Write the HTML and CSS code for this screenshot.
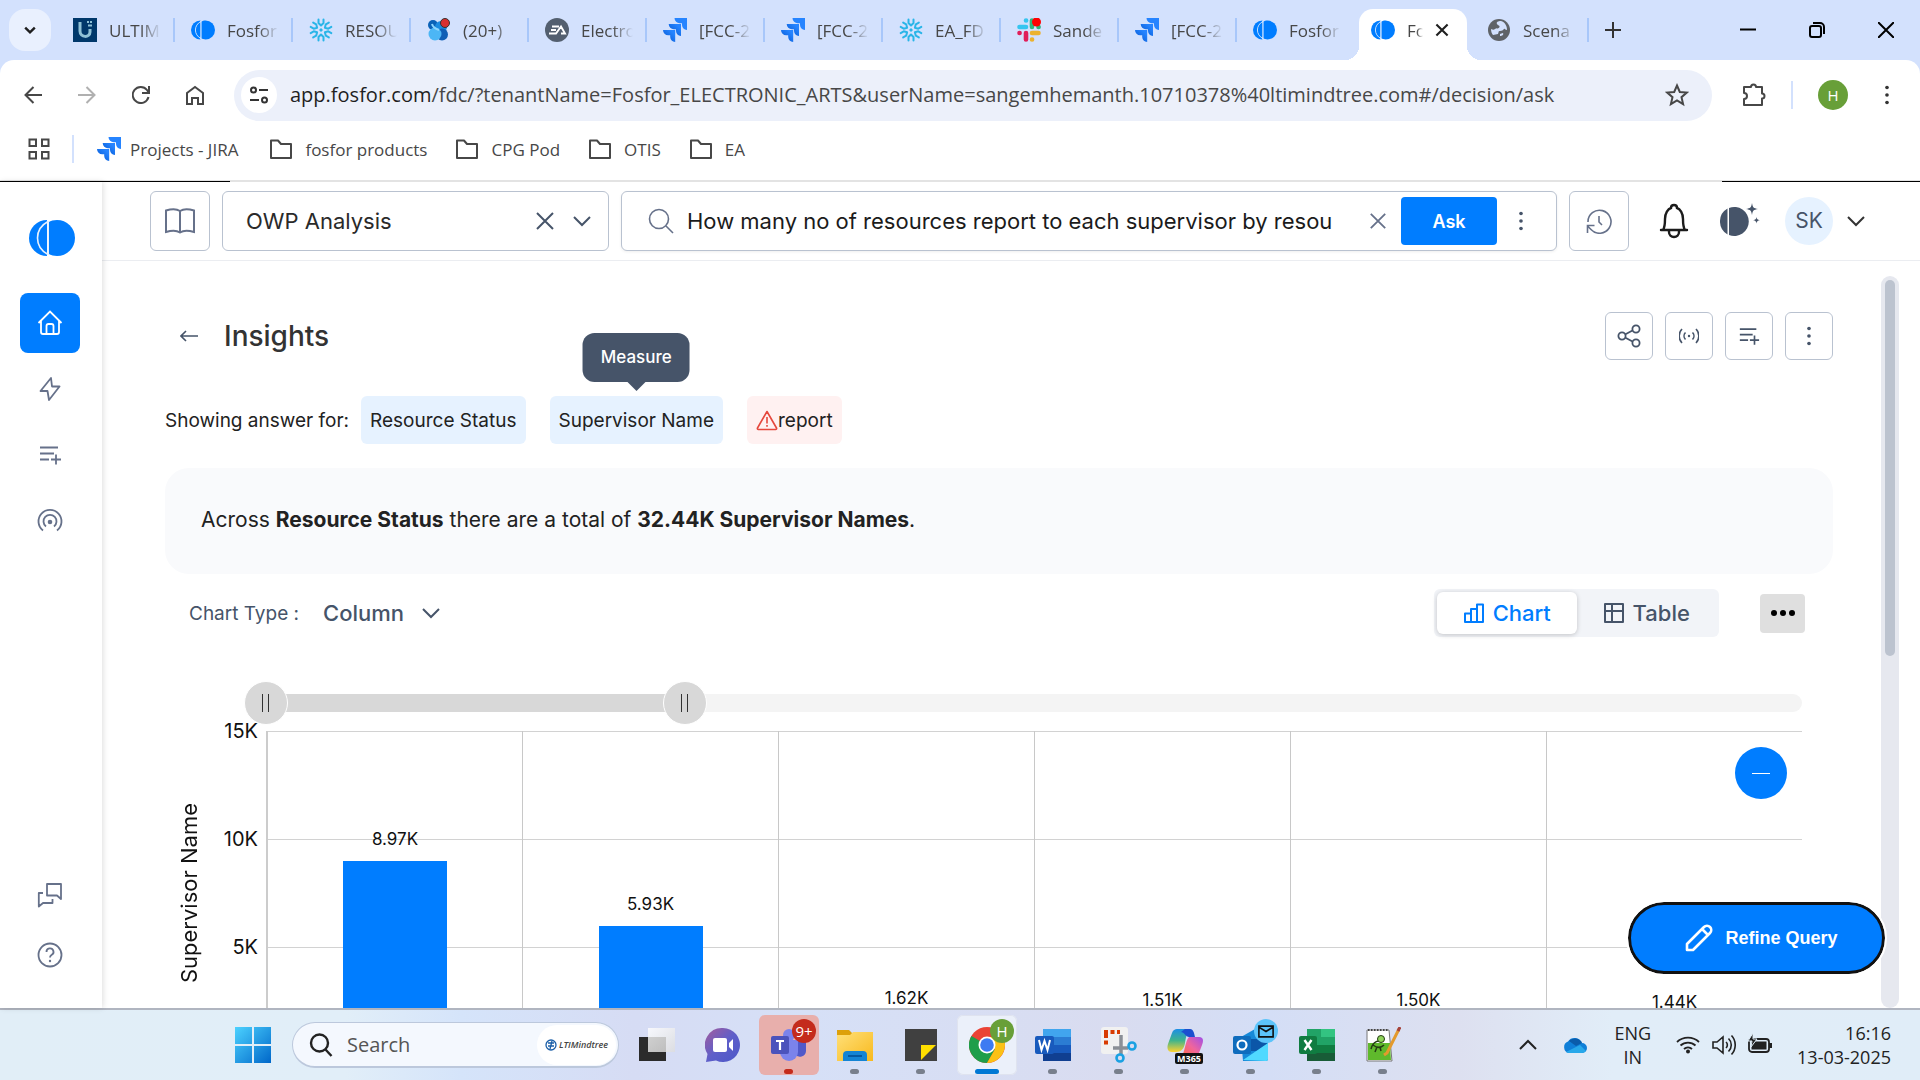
FILE: index.html
```html
<!DOCTYPE html>
<html lang="en">
<head>
<meta charset="utf-8">
<title>Fosfor - Insights</title>
<link rel="stylesheet" href="styles.css">
</head>
<body>
<svg class="sprite" aria-hidden="true">
  <defs>
    <linearGradient id="g-jira" x1="1" y1="0" x2="0" y2="1"><stop offset=".2" stop-color="#2684ff"/><stop offset="1" stop-color="#0052cc"/></linearGradient>
    <linearGradient id="g-win" x1="0" y1="0" x2="1" y2="1"><stop offset="0" stop-color="#4cd2ff"/><stop offset="1" stop-color="#0067c9"/></linearGradient>
    <linearGradient id="g-chat" x1="0" y1="0" x2="1" y2="1"><stop offset="0" stop-color="#a65c9c"/><stop offset=".5" stop-color="#5f5fc9"/><stop offset="1" stop-color="#4b57c8"/></linearGradient>
    <linearGradient id="g-folder" x1="0" y1="0" x2="1" y2="1"><stop offset="0" stop-color="#ffe07a"/><stop offset="1" stop-color="#f8b91d"/></linearGradient>
    <linearGradient id="g-cop1" x1="0" y1="0" x2="0" y2="1"><stop offset="0" stop-color="#1c8ee6"/><stop offset=".5" stop-color="#3fb48c"/><stop offset="1" stop-color="#ffd22e"/></linearGradient>
    <linearGradient id="g-cop2" x1="0" y1="1" x2="1" y2="0"><stop offset="0" stop-color="#ff6a3d"/><stop offset=".5" stop-color="#f0659c"/><stop offset="1" stop-color="#a04fe8"/></linearGradient>
    <linearGradient id="g-view" x1="0" y1="0" x2="1" y2="1"><stop offset="0" stop-color="#fff"/><stop offset="1" stop-color="#ddd"/></linearGradient>
    <path id="snow-arm" d="M9.500 1.500V5L12 7.500 14.500 5V1.500"/>
  </defs>
  <symbol id="i-fosfor" viewBox="0 0 46 36"><path d="M18 0a18 18 0 0 0 0 36z" fill="#007dff"/><path d="M28 0a18 18 0 0 1 0 36c-3.300 0-6.300-.9-8.500-2.200V2.200C21.700.9 24.700 0 28 0z" fill="#007dff"/><path d="M19 1.500C5 9 5 27 19 34.500M19.200 1v34" fill="none" stroke="#e8f2ff" stroke-width="1.600"/><path d="M17.500 5v26C9 23 9 13 17.500 5z" fill="#007dff"/></symbol>
  <symbol id="i-ul" viewBox="0 0 24 24"><path d="M0 0h24v24H0z" fill="#00386b"/><path d="M7 4v9c0 7 10 7 10 1V11" fill="none" stroke="#8fc1d6" stroke-width="3"/><path d="M14 4h2m1 0h2M15 7.500h4" stroke="#8fc1d6" stroke-width="2"/></symbol>
  <symbol id="i-snow" viewBox="0 0 24 24"><g fill="none" stroke="#29b5e8" stroke-width="2" stroke-linecap="round" stroke-linejoin="round"><use href="#snow-arm"/><use href="#snow-arm" transform="rotate(60 12 12)"/><use href="#snow-arm" transform="rotate(120 12 12)"/><use href="#snow-arm" transform="rotate(180 12 12)"/><use href="#snow-arm" transform="rotate(240 12 12)"/><use href="#snow-arm" transform="rotate(300 12 12)"/></g><path d="M12 10l2 2-2 2-2-2z" fill="#29b5e8"/></symbol>
  <symbol id="i-viva" viewBox="0 0 24 24"><circle cx="6" cy="7" r="5" fill="#0a62b8"/><circle cx="14" cy="9" r="6" fill="#1b8be0"/><circle cx="15" cy="16.500" r="6" fill="#0f5eb5"/><circle cx="8" cy="16" r="6.500" fill="#4cb6f5"/><path d="M5 6c1 4 4 5 7 6" stroke="#8ed7ff" stroke-width="2" fill="none"/><circle cx="18" cy="5" r="4.500" fill="#d93030" stroke="#333" stroke-width="1"/></symbol>
  <symbol id="i-ea" viewBox="0 0 24 24"><circle cx="12" cy="12" r="12" fill="#535f6f"/><path d="M7 8.500h7M6 12h5M4 15.500h7l5-7 4 7h-4" fill="none" stroke="#fff" stroke-width="1.900"/></symbol>
  <symbol id="i-jira" viewBox="0 0 24 24"><path d="M11.500 0H24v12a5.500 5.500 0 0 1-5-5V5.200h-2A5.200 5.200 0 0 1 11.500 0z" fill="#2684ff"/><path d="M5.700 6h12.300v12a5.500 5.500 0 0 1-5-5v-1.800h-2A5.200 5.200 0 0 1 5.700 6z" fill="url(#g-jira)"/><path d="M0 12h12.200v12a5.500 5.500 0 0 1-5-5v-1.800h-2A5.200 5.200 0 0 1 0 12z" fill="url(#g-jira)"/></symbol>
  <symbol id="i-slack" viewBox="0 0 24 24"><g fill="none" stroke-width="4.600" stroke-linecap="round"><path d="M2.500 9H9M9 2.500h.1" stroke="#36c5f0"/><path d="M15 2.500V9M21.500 9h.1" stroke="#2eb67d"/><path d="M15 15h6.500M15 21.500h.1" stroke="#ecb22e"/><path d="M9 15v6.500M2.500 15h.1" stroke="#e01e5a"/></g><circle cx="19.500" cy="4" r="4.500" fill="#f00"/></symbol>
  <symbol id="i-globe" viewBox="0 0 24 24"><circle cx="12" cy="12" r="11" fill="#5f6368"/><path d="M14 3c-3 0-5 1-4 3s3 1 2.500 3-3.500 1-4.500 2-2 1-4 0c0 3 1 5 2 6l5-1c1-2 0-3 2-3s3-1 4-2 1 1 3 1c0-4-2-8-6-9zM13 16l3-1c1 2-1 3-3 3z" fill="#d3e1fd"/></symbol>
  <symbol id="i-x" viewBox="0 0 20 20"><path d="M2 2l16 16M18 2L2 18" fill="none" stroke="currentColor"/></symbol>
  <symbol id="i-down" viewBox="0 0 20 20"><path d="M2 6l8 8 8-8" fill="none" stroke="currentColor"/></symbol>
  <symbol id="i-dots" viewBox="0 0 24 24"><g fill="currentColor" stroke="none"><circle cx="12" cy="3" r="2.200"/><circle cx="12" cy="12" r="2.200"/><circle cx="12" cy="21" r="2.200"/></g></symbol>
  <symbol id="i-folder" viewBox="0 0 24 24"><path d="M2 3.500h7l3 3.500h10v14H2z" fill="none" stroke="#474747" stroke-width="2" stroke-linejoin="round"/></symbol>
  <symbol id="i-listadd" viewBox="0 0 24 24"><path d="M2 4.500h18M2 10.500h14M2 16.500h9M18 11.500v10M13 16.500h10" fill="none" stroke="currentColor" stroke-width="1.800"/></symbol>
</svg>

<header class="browser">
  <nav class="tabs" aria-label="Browser tabs">
    <button class="tab-search" aria-label="Search tabs"><svg class="s16" viewBox="0 0 20 20"><path d="M4 7l6 6 6-6" fill="none" stroke="#1f1f1f" stroke-width="3"/></svg></button>
    <button class="tab"><svg><use href="#i-ul"/></svg><span>ULTIM</span></button>
    <button class="tab"><svg><use href="#i-fosfor"/></svg><span>Fosfor</span></button>
    <button class="tab"><svg><use href="#i-snow"/></svg><span>RESOU</span></button>
    <button class="tab"><svg><use href="#i-viva"/></svg><span>(20+)</span></button>
    <button class="tab"><svg><use href="#i-ea"/></svg><span>Electro</span></button>
    <button class="tab"><svg><use href="#i-jira"/></svg><span>[FCC-2</span></button>
    <button class="tab"><svg><use href="#i-jira"/></svg><span>[FCC-2</span></button>
    <button class="tab"><svg><use href="#i-snow"/></svg><span>EA_FD</span></button>
    <button class="tab"><svg><use href="#i-slack"/></svg><span>Sande</span></button>
    <button class="tab"><svg><use href="#i-jira"/></svg><span>[FCC-2</span></button>
    <button class="tab last"><svg><use href="#i-fosfor"/></svg><span>Fosfor</span></button>
    <div class="tab active"><svg><use href="#i-fosfor"/></svg><span>Fo</span><button class="bare" aria-label="Close tab"><svg class="s16 heavy"><use href="#i-x"/></svg></button></div>
    <button class="tab"><svg><use href="#i-globe"/></svg><span>Scena</span></button>
    <button class="bare new-tab" aria-label="New tab"><svg class="s16" viewBox="0 0 16 16"><path d="M8 0v16M0 8h16" stroke="#333" stroke-width="2"/></svg></button>
    <div class="win">
      <button class="bare" aria-label="Minimize"><svg class="s16" viewBox="0 0 16 16"><path d="M0 7.500h16" stroke="#000" stroke-width="2"/></svg></button>
      <button class="bare" aria-label="Restore"><svg class="s16" viewBox="0 0 16 16"><path d="M4 1h7a4 4 0 0 1 4 4v7" fill="none" stroke="#000" stroke-width="2"/><rect x="1" y="4" width="11" height="11" rx="2" fill="none" stroke="#000" stroke-width="2"/></svg></button>
      <button class="bare" aria-label="Close"><svg class="s16" viewBox="0 0 16 16"><path d="M0 0l16 16M16 0L0 16" stroke="#000" stroke-width="2"/></svg></button>
    </div>
  </nav>
  <div class="toolbar">
    <div class="navs">
      <button class="bare" aria-label="Back"><svg class="s18" viewBox="0 0 18 18"><path d="M18 9H2M9.500 1L1.500 9l8 8" fill="none" stroke="#474747" stroke-width="2"/></svg></button>
      <button class="bare" aria-label="Forward"><svg class="s18" viewBox="0 0 18 18"><path d="M0 9h16M8.500 1l8 8-8 8" fill="none" stroke="#b0b0b0" stroke-width="2"/></svg></button>
      <button class="bare" aria-label="Reload"><svg class="s18" viewBox="0 0 18 18"><path d="M16.500 11A8 8 0 1 1 15 4l2 3M17 0v7h-7" fill="none" stroke="#474747" stroke-width="2"/></svg></button>
      <button class="bare" aria-label="Home"><svg class="s20" viewBox="0 0 20 20"><path d="M2 8l8-6 8 6v11h-5v-6H7v6H2z" fill="none" stroke="#474747" stroke-width="2"/></svg></button>
    </div>
    <div class="omnibox">
      <button class="site" aria-label="Site information"><svg class="s20" viewBox="0 0 20 20"><g fill="none" stroke="#333" stroke-width="2"><circle cx="4.500" cy="5" r="2.500"/><path d="M10 5h9M1 15h9"/><circle cx="15.500" cy="15" r="2.500"/></g></svg></button>
      <p class="url" tabindex="0"><b>app.fosfor.com</b>/fdc/?tenantName=Fosfor_ELECTRONIC_ARTS&amp;userName=sangemhemanth.10710378%40ltimindtree.com#/decision/ask</p>
      <button class="bare" aria-label="Bookmark"><svg class="s24" viewBox="0 0 24 24"><path d="M12 2.500l2.800 6.500 7 .6-5.300 4.600 1.600 6.900-6.100-3.700-6.100 3.700 1.600-6.900L2.200 9.600l7-.6z" fill="none" stroke="#474747" stroke-width="2"/></svg></button>
    </div>
    <button class="bare ext" aria-label="Extensions"><svg class="s26" viewBox="0 0 26 26"><path d="M3 5h7a2.500 2.500 0 0 1 5 0h6v6.500a2.500 2.500 0 0 1 0 5V23H3v-6a3 3 0 0 0 0-6z" fill="none" stroke="#474747" stroke-width="2" stroke-linejoin="round"/></svg></button>
    <i class="sep"></i>
    <button class="me" aria-label="Profile">H</button>
    <button class="bare" aria-label="Menu"><svg class="s20 dark"><use href="#i-dots"/></svg></button>
  </div>
  <nav class="bookmarks" aria-label="Bookmarks">
    <button class="bare" aria-label="Apps"><svg class="s22" viewBox="0 0 22 22"><path d="M1.500 1.500h6.500V8H1.500zM14 1.500h6.500V8H14zM1.500 14h6.500v6.500H1.500zM14 14h6.500v6.500H14z" fill="none" stroke="#474747" stroke-width="2"/></svg></button>
    <i class="sep"></i>
    <a class="jira" href="#"><svg><use href="#i-jira"/></svg>Projects - JIRA</a>
    <a href="#"><svg><use href="#i-folder"/></svg>fosfor products</a>
    <a href="#"><svg><use href="#i-folder"/></svg>CPG Pod</a>
    <a href="#"><svg><use href="#i-folder"/></svg>OTIS</a>
    <a href="#"><svg><use href="#i-folder"/></svg>EA</a>
  </nav>
  <div class="edge"><i class="edge-left"></i><i class="edge-right"></i></div>
</header>

<div class="app">
  <nav class="side" aria-label="Main">
    <a class="brand" href="#" aria-label="Fosfor"><svg><use href="#i-fosfor"/></svg></a>
    <a class="item on" href="#" aria-label="Home"><svg class="s26" viewBox="0 0 26 26"><path d="M1.500 13L13 1.500 24.500 13M4 11v11a2 2 0 0 0 2 2h14a2 2 0 0 0 2-2V11M9.500 24v-8a2 2 0 0 1 2-2h3a2 2 0 0 1 2 2v8" fill="none" stroke="#fff" stroke-width="1.800"/></svg></a>
    <a class="item" href="#" aria-label="Actions"><svg class="s24" viewBox="0 0 24 24"><path d="M13 1L2.500 14h7L11 23 21.500 9.500H14z" fill="none" stroke="currentColor" stroke-width="1.800" stroke-linejoin="round"/></svg></a>
    <a class="item" href="#" aria-label="Lists"><svg class="s24"><use href="#i-listadd"/></svg></a>
    <a class="item" href="#" aria-label="Signals"><svg class="s26" viewBox="0 0 26 26"><g fill="none" stroke="currentColor" stroke-width="1.800"><path d="M6 22.500A11.500 11.500 0 1 1 20 22.500M9 18.500a6.500 6.500 0 1 1 8 0"/></g><circle cx="13" cy="14" r="2.300" fill="currentColor"/></svg></a>
    <span class="grow"></span>
    <a class="item" href="#" aria-label="Feedback"><svg class="s26" viewBox="0 0 26 26"><path d="M10 2h14v15l-4-3.500H10zM6 11H1.800v13.500L6 21h9.500v-4" fill="none" stroke="currentColor" stroke-width="1.800" stroke-linejoin="round"/></svg></a>
    <a class="item" href="#" aria-label="Help"><svg class="s26" viewBox="0 0 26 26"><g fill="none" stroke="currentColor" stroke-width="1.800"><circle cx="13" cy="13" r="11.500"/><path d="M9.500 10a3.500 3.500 0 1 1 5 3c-1 .7-1.500 1.200-1.500 2.500"/></g><circle cx="13" cy="19" r="1.200" fill="currentColor"/></svg></a>
  </nav>

  <div class="work">
    <header class="top">
      <button class="box" aria-label="Catalog"><svg class="s30" viewBox="0 0 30 30"><path d="M15 5c-3-2-9-2-14-.5V26c5-1.500 11-1.500 14 .5 3-2 9-2 14-.5V4.500C24 3 18 3 15 5zv21.500" fill="none" stroke="currentColor" stroke-width="2"/></svg></button>
      <div class="field source">
        <select aria-label="Data source"><option>OWP Analysis</option></select>
        <button class="bare" aria-label="Clear source"><svg class="s20 slate"><use href="#i-x"/></svg></button>
        <svg class="s20 slate"><use href="#i-down"/></svg>
      </div>
      <form class="field query">
        <svg class="s26" viewBox="0 0 26 26"><g fill="none" stroke="currentColor" stroke-width="1.600"><circle cx="11" cy="11" r="9.500"/><path d="M18 18l7 7"/></g></svg>
        <input type="text" aria-label="Question" value="How many no of resources report to each supervisor by resou">
        <button type="button" class="bare" aria-label="Clear question"><svg class="s18"><use href="#i-x"/></svg></button>
        <button type="button" class="ask">Ask</button>
        <button type="button" class="bare more" aria-label="More options"><svg class="s20 slate"><use href="#i-dots"/></svg></button>
      </form>
      <button class="box" aria-label="History"><svg class="s26" viewBox="0 0 26 26"><path d="M2 14A11.500 11.500 0 1 1 5 21.500l-3-3M1.500 25v-7.500h7M13 8v6l3 3" fill="none" stroke="currentColor" stroke-width="1.600"/></svg></button>
      <div class="user">
        <button class="bare" aria-label="Notifications"><svg class="bell" viewBox="0 0 30 36"><path d="M2 27h26M4 27c2-3 2-6 2-11 0-6 3-10 6-11 0-4 6-4 6 0 3 1 6 5 6 11 0 5 0 8 2 11M10 27v2a5 5 0 0 0 10 0v-2" fill="none" stroke="#1b1b1b" stroke-width="2.400" stroke-linecap="round"/></svg></button>
        <button class="bare" aria-label="Assistant"><svg class="moon" viewBox="0 0 40 36"><path d="M7.500 5.500v26a15 15 0 0 1 0-26zM9 5a14.500 14.500 0 1 1 0 27z" fill="#465469"/><path d="M32 0c.8 4.500 1.500 5.200 6 6-4.500.8-5.200 1.500-6 6-.8-4.500-1.500-5.200-6-6 4.500-.8 5.200-1.500 6-6zM36.500 14c.4 2.300 1 2.800 3.300 3.200-2.300.4-2.900 1-3.300 3.200-.4-2.200-1-2.800-3.300-3.200 2.300-.4 2.900-.9 3.300-3.200z" fill="#465469"/></svg></button>
        <span class="avatar">SK</span>
        <button class="bare" aria-label="Account menu"><svg class="s20 dark"><use href="#i-down"/></svg></button>
      </div>
    </header>

    <div class="scroll">
      <main class="content">
        <div class="title">
          <a class="back" href="#" aria-label="Back to list"><svg class="s18" viewBox="0 0 18 18"><path d="M18 9H1M6 4L1 9l5 5" fill="none" stroke="#465469" stroke-width="1.600"/></svg></a>
          <h1>Insights</h1>
          <button class="tool" aria-label="Share"><svg class="s24" viewBox="0 0 24 24"><g fill="none" stroke="currentColor" stroke-width="1.800"><circle cx="5" cy="12" r="3.600"/><circle cx="19" cy="5" r="3.600"/><circle cx="19" cy="19" r="3.600"/><path d="M8 10.500l7.500-4M8 13.500l7.500 4"/></g></svg></button>
          <button class="tool" aria-label="Broadcast"><svg class="s20" viewBox="0 0 20 20"><g fill="none" stroke="currentColor" stroke-width="1.600"><path d="M3 3a10 10 0 0 0 0 14M17 3a10 10 0 0 1 0 14M6.500 6.500a5 5 0 0 0 0 7M13.500 6.500a5 5 0 0 1 0 7"/></g><circle cx="10" cy="10" r="1.200" fill="currentColor"/></svg></button>
          <button class="tool" aria-label="Add to list"><svg class="s22"><use href="#i-listadd"/></svg></button>
          <button class="tool" aria-label="More"><svg class="s20"><use href="#i-dots"/></svg></button>
        </div>
        <div class="answer-for">
          <p>Showing answer for:</p>
          <button class="chip">Resource Status</button>
          <button class="chip" aria-describedby="tip">Supervisor Name<span class="tip" id="tip" role="tooltip">Measure</span></button>
          <button class="chip bad"><svg class="s22" viewBox="0 0 22 22"><path d="M11 2.500L20.500 19a1 1 0 0 1-1 1.500h-17a1 1 0 0 1-1-1.500zM11 8v6.500M11 16v1.800" fill="none" stroke="#e5483d" stroke-width="1.600" stroke-linejoin="round"/></svg>report</button>
        </div>
        <p class="summary">Across <b>Resource Status</b> there are a total of <b>32.44K Supervisor Names</b>.</p>
        <div class="controls">
          <label for="ctype">Chart Type :</label>
          <div class="ctype"><select id="ctype"><option>Column</option></select><svg class="s20"><use href="#i-down"/></svg></div>
          <div class="seg">
            <button class="on"><svg class="s22" viewBox="0 0 22 22"><path d="M2 11.500h6V20H2zM8 7h6v13H8zM14 2.500h6V20h-6z" fill="none" stroke="currentColor" stroke-width="2" stroke-linejoin="round"/></svg>Chart</button>
            <button><svg class="s22" viewBox="0 0 22 22"><path d="M2 2h18v18H2zM9 2v18M2 9h18" fill="none" stroke="currentColor" stroke-width="2" stroke-linejoin="round"/></svg>Table</button>
          </div>
          <button class="dots" aria-label="Chart options"><svg class="s24" viewBox="0 0 24 24"><circle cx="3" cy="12" r="3"/><circle cx="12" cy="12" r="3"/><circle cx="21" cy="12" r="3"/></svg></button>
        </div>

        <section class="chart" aria-label="Supervisor Name by Resource Status">
          <div class="range">
            <div class="track"><i style="width:27.280%"></i></div>
            <input type="range" aria-label="Range start" min="0" max="10000" value="0">
            <input type="range" aria-label="Range end" min="0" max="10000" value="2728">
          </div>
          <div class="axis-name"><span>Supervisor Name</span></div>
          <div class="ticks"><span>15K</span><span>10K</span><span>5K</span><span>0</span></div>
          <div class="plot">
            <div class="col"><span>8.97K</span><i style="height:194px"></i></div>
            <div class="col"><span>5.93K</span><i style="height:129px"></i></div>
            <div class="col"><span>1.62K</span><i style="height:35px"></i></div>
            <div class="col"><span>1.51K</span><i style="height:33px"></i></div>
            <div class="col"><span>1.50K</span><i style="height:33px"></i></div>
            <div class="col"><span>1.44K</span><i style="height:31px"></i></div>
            <button class="zoom-out" aria-label="Zoom out"></button>
          </div>
        </section>
      </main>
      <div class="bar"><i></i></div>
    </div>
    <button class="refine"><svg viewBox="0 0 28 28"><path d="M2 26v-6L19 3a4.200 4.200 0 0 1 6 6L8 26zM17 5l6 6" fill="none" stroke="#fff" stroke-width="2.600" stroke-linejoin="round"/></svg>Refine Query</button>
  </div>
</div>

<footer class="taskbar">
  <div class="apps">
    <button class="bare start" aria-label="Start"><svg viewBox="0 0 36 36"><path d="M0 0h17v17H0zM19 0h17v17H19zM0 19h17v17H0zM19 19h17v17H19z" fill="url(#g-win)"/></svg></button>
    <div class="find">
      <svg class="s24" viewBox="0 0 24 24"><g fill="none" stroke="#222" stroke-width="2.400"><circle cx="10.500" cy="10" r="8.500"/><path d="M16.500 16.500l6 6.500"/></g></svg>
      <input type="text" aria-label="Search" placeholder="Search">
      <span class="ltim"><svg viewBox="0 0 12 12"><g fill="none" stroke="#1b5fa8" stroke-width="1.300"><circle cx="6" cy="6" r="5"/><path d="M3 4h6M3 7h6M7 2L5 10"/></g></svg>LTIMindtree</span>
    </div>
    <button class="app-btn" aria-label="Task view"><svg viewBox="0 0 36 36"><path d="M0 10h27v24H0z" fill="#2b2b2b"/><path d="M9 1h27v24H9z" fill="url(#g-view)" opacity=".8"/></svg></button>
    <button class="app-btn" aria-label="Chat"><svg viewBox="0 0 36 36"><path d="M18 1a17 17 0 1 1-7 32.500L1 35l1.500-8A17 17 0 0 1 18 1z" fill="url(#g-chat)"/><rect x="8" y="11" width="14" height="14" rx="2" fill="#fff"/><path d="M24 16l4-4v12l-4-4z" fill="#fff"/></svg></button>
    <button class="app-btn alert run" aria-label="Teams"><svg viewBox="0 0 36 36"><circle cx="18" cy="8" r="6" fill="#7b83eb"/><circle cx="30" cy="10" r="4" fill="#5059c9"/><path d="M24 13h11v11a6 6 0 0 1-11 3z" fill="#5059c9"/><path d="M9 13h18v12a9 9 0 0 1-18 0z" fill="#7b83eb"/><rect y="9" width="18" height="18" rx="2" fill="#4b53bc"/><path d="M5 14h8M9 14v9" stroke="#fff" stroke-width="2.200"/></svg><em class="badge red">9+</em></button>
    <button class="app-btn run" aria-label="Explorer"><svg viewBox="0 0 36 36"><path d="M0 3h12l3 3v6H0z" fill="#dda00a"/><path d="M0 8h13l3-3h20v29H0z" fill="url(#g-folder)"/><path d="M6 34v-6a4 4 0 0 1 4-4h16a4 4 0 0 1 4 4v6z" fill="#1484d4"/><path d="M11 29h14" stroke="#004b91" stroke-width="1.500"/></svg></button>
    <button class="app-btn run" aria-label="Sticky notes"><svg viewBox="0 0 36 36"><path d="M2 2h32v32H2z" fill="#404040"/><path d="M18 18h15L18 33z" fill="#ffdf00"/></svg></button>
    <button class="app-btn current run" aria-label="Chrome"><svg viewBox="0 0 36 36"><circle cx="18" cy="18" r="18" fill="#ea4335"/><path d="M18 18L2.400 9A18 18 0 0 0 18 36l7.800-13.500z" fill="#1e9e4a"/><path d="M18 10h16.100A18 18 0 0 1 18 36l7.800-13.500z" fill="#fbc116"/><circle cx="18" cy="18" r="8.500" fill="#fff"/><circle cx="18" cy="18" r="6.800" fill="#3e7bf2"/></svg><em class="badge green">H</em></button>
    <button class="app-btn run" aria-label="Word"><svg viewBox="0 0 36 36"><path d="M8 2h28v8H8z" fill="#41a5ee"/><path d="M8 10h28v8H8z" fill="#2b7cd3"/><path d="M8 18h28v8H8z" fill="#185abd"/><path d="M8 26h28v8H8z" fill="#103f91"/><rect y="9" width="19" height="18" rx="2" fill="#185abd"/><path d="M4 13l2.500 10 3-9 3 9L15 13" fill="none" stroke="#fff" stroke-width="2"/></svg></button>
    <button class="app-btn run" aria-label="Snipping tool"><svg viewBox="0 0 36 36"><rect width="27" height="27" rx="3" fill="#f1f1f1"/><path d="M3 5h16M5 7v13" stroke="#d83b01" stroke-width="4" stroke-dasharray="4 2.500"/><path d="M12 21h15M20 8v19" stroke="#8a8f96" stroke-width="3.500"/><g fill="none" stroke="#1ba1e2" stroke-width="2.600"><circle cx="31" cy="19" r="3.500"/><circle cx="19" cy="31" r="3.500"/></g></svg></button>
    <button class="app-btn run" aria-label="M365"><svg viewBox="0 0 36 36"><path d="M10 2h14c-4 2-5 8-6 14-1 6-4 9-9 9H5c-5 0-5-5-4-8L5 6c1-3 3-4 5-4z" fill="url(#g-cop1)"/><path d="M18 2h5c3 0 4 3 5 8h-6c-3 0-5-5-8-5z" fill="#1b4fd0"/><path d="M22 10h10c4 0 5 3 3 8l-3 8-18 4c4-4 4-16 8-20z" fill="url(#g-cop2)"/></svg><em class="m365">M365</em></button>
    <button class="app-btn run" aria-label="Outlook"><svg viewBox="0 0 36 36"><path d="M8 10L22 2l13 10v20a2 2 0 0 1-2 2H10z" fill="#1689d8"/><path d="M18 12h16v12H18z" fill="#0b56a8"/><path d="M10 33l25-17v16a2 2 0 0 1-2 2z" fill="#50d9ff"/><rect y="9" width="18" height="18" rx="2" fill="#0f6cbd"/><circle cx="9" cy="18" r="4.500" fill="none" stroke="#fff" stroke-width="2.200"/></svg><em class="badge sky"><svg viewBox="0 0 18 14"><path d="M1 1h16v12H1zM1 2l8 5 8-5" fill="none" stroke="#111" stroke-width="1.800"/></svg></em></button>
    <button class="app-btn run" aria-label="Excel"><svg viewBox="0 0 36 36"><path d="M8 2h14v16H8z" fill="#21a366"/><path d="M22 2h14v8H22z" fill="#33c481"/><path d="M22 10h14v8H22z" fill="#21a366"/><path d="M8 18h28v8H8z" fill="#107c41"/><path d="M8 26h28v8H8z" fill="#185c37"/><rect y="9" width="18" height="18" rx="2" fill="#107c41"/><path d="M5.500 13l7 10M12.500 13l-7 10" stroke="#fff" stroke-width="2.400"/></svg></button>
    <button class="app-btn run" aria-label="Notepad++"><svg viewBox="0 0 36 36"><path d="M2 3h22l3 31L2 34z" fill="#fff" stroke="#777" stroke-width="1"/><path d="M3 16h22l1 17H3z" fill="#5fb92c"/><path d="M3 3h20" stroke="#444" stroke-width="2" stroke-dasharray="1.500 1.500"/><path d="M6 22c2-8 8-9 12-8M8 18c4 3 8 3 11 0M10 25l2-5m4 4l-1-4" fill="none" stroke="#233b12" stroke-width="1.500"/><circle cx="16" cy="12" r="3.500" fill="#8fd45a" stroke="#233b12"/><path d="M34 2L22 26l-3 2" fill="none" stroke="#e39a2d" stroke-width="3"/><path d="M35 0l-2 4" stroke="#a5423c" stroke-width="3"/></svg></button>
  </div>
  <div class="tray">
    <button class="bare" aria-label="Hidden icons"><svg class="s18" viewBox="0 0 18 18"><path d="M1 13l8-8 8 8" fill="none" stroke="#222" stroke-width="2"/></svg></button>
    <svg class="s24" viewBox="0 0 24 24"><path d="M6 20a6 6 0 0 1-1-11.500A8 8 0 0 1 19 10a5 5 0 0 1 0 10z" fill="#0f7fd8"/><path d="M6 8a8 8 0 0 1 13 2l-6 3z" fill="#0a5cab"/><path d="M3 19l14-7 6 6a5 5 0 0 1-4 2H6a6 6 0 0 1-3-1z" fill="#28a8ea"/></svg>
    <p class="lang">ENG<br>IN</p>
    <div class="status">
      <svg class="s24" viewBox="0 0 24 24"><g fill="none" stroke="#222" stroke-width="1.800"><path d="M1 9a16 16 0 0 1 22 0M4.500 12.500a11 11 0 0 1 15 0M8 16a6 6 0 0 1 8 0"/></g><circle cx="12" cy="18.500" r="2" fill="#222"/></svg>
      <svg class="s24" viewBox="0 0 24 24"><path d="M1 9h4l6-5v16l-6-5H1zM14 9a4 4 0 0 1 0 6M16.500 5.500a9 9 0 0 1 0 13M19.500 2.500a14 14 0 0 1 0 19" fill="none" stroke="#222" stroke-width="1.600"/></svg>
      <svg class="s24" viewBox="0 0 24 24"><rect x="1" y="6" width="20" height="13" rx="3" fill="none" stroke="#222" stroke-width="1.800"/><path d="M3.500 8.500h15v8h-15zM21 10h3v5h-3z" fill="#222"/><path d="M5 0L0 8h4l-1 6 6-8H5z" fill="#222" stroke="#e1eef8" stroke-width="1"/></svg>
    </div>
    <p class="clock">16:16<br>13-03-2025</p>
  </div>
</footer>
</body>
</html>
```

FILE: styles.css
```css
* { box-sizing: border-box; }
body {
  margin: 0;
  height: 100vh;
  display: flex;
  flex-direction: column;
  overflow: hidden;
  background: #fff;
  color: #222;
  font-family: Inter, "Noto Sans", sans-serif;
  font-size: 19px;
}
p, h1 { margin: 0; }
a { color: inherit; text-decoration: none; }
button, input, select { font: inherit; color: inherit; }
button { padding: 0; border: 0; background: none; }
svg { display: block; flex: none; }
em { font-style: normal; }
.sprite { position: absolute; width: 0; height: 0; }
.bare { display: flex; align-items: center; justify-content: center; }
.s16 { width: 16px; height: 16px; }
.s18 { width: 18px; height: 18px; stroke-width: 2px; }
.s20 { width: 20px; height: 20px; stroke-width: 2px; }
.s22 { width: 22px; height: 22px; }
.s24 { width: 24px; height: 24px; }
.s26 { width: 26px; height: 26px; }
.s30 { width: 30px; height: 30px; }
.slate { color: #465469; }
.dark { color: #333; }
.heavy { stroke-width: 3px; color: #1f1f1f; }
.grow { flex: 1; }

/* Browser frame */
.browser { flex: none; background: #d3e1fd; font-family: "Open Sans", "Noto Sans", sans-serif; }
.tabs { display: flex; align-items: flex-end; height: 60px; padding-left: 9px; }
.tab-search {
  flex: none; width: 42px; height: 42px; margin: 0 6px 9px 0; border-radius: 16px; background: #e9f0fe;
  display: flex; align-items: center; justify-content: center;
}
.tab {
  position: relative; flex: 0 1 118px; min-width: 0; height: 51px; padding: 0 14px 9px 16px;
  display: flex; align-items: center; gap: 12px; font-size: 17px; color: #474747;
}
.tab svg { width: 24px; height: 24px; }
.tab span {
  flex: 1; min-width: 0; overflow: hidden; white-space: nowrap; text-align: left;
  mask-image: linear-gradient(90deg, #000 60%, transparent);
}
.tab::after { content: ""; position: absolute; right: 0; top: 9px; width: 2px; height: 24px; background: #a8c7fa; }
.tab.last::after { display: none; }
.tab.active {
  flex-basis: 108px; margin: 0 4px; padding: 0 18px 9px 12px; background: #fff; border-radius: 14px 14px 0 0;
}
.tab.active .s16 { width: 14px; height: 14px; }
.tab.active::before, .tab.active::after {
  content: ""; position: absolute; top: auto; bottom: 0; width: 14px; height: 14px; background: none;
}
.tab.active::before { left: -14px; background: radial-gradient(circle at 0 0, transparent 14px, #fff 14px); }
.tab.active::after { right: -14px; background: radial-gradient(circle at 100% 0, transparent 14px, #fff 14px); }
.new-tab { width: 48px; height: 60px; }
.win { display: flex; margin-left: auto; height: 60px; }
.win .bare { width: 69px; }
.toolbar {
  display: flex; align-items: center; height: 70px; padding: 0 10px 0 6px;
  background: #fff; border-radius: 14px 14px 0 0;
}
.navs { display: flex; width: 228px; flex: none; }
.navs .bare { width: 54px; height: 40px; }
.omnibox {
  flex: 1; min-width: 0; height: 51px; border-radius: 26px; background: #ecf0fa;
  display: flex; align-items: center; padding: 0 23px 0 7px;
}
.site { width: 36px; height: 36px; border-radius: 50%; background: #fff; display: flex; align-items: center; justify-content: center; margin-right: 13px; }
.url { flex: 1; min-width: 0; overflow: hidden; white-space: nowrap; font-size: 20px; line-height: 28px; color: #474747; }
.url b { font-weight: 400; color: #1f1f1f; }
.ext { margin: 0 24px 0 29px; }
.sep { width: 2px; height: 28px; background: #d3e1fd; }
.me { width: 30px; height: 30px; margin: 0 29px 0 25px; border-radius: 50%; background: #689f38; color: #fff; font-size: 15px; }
.toolbar > .bare:last-child { margin-right: 13px; }
.bookmarks { display: flex; align-items: center; height: 50px; padding: 0 28px 12px; background: #fff; font-size: 17px; color: #474747; }
.bookmarks .sep { margin: 0 23px 0 22px; }
.bookmarks a { display: flex; align-items: center; gap: 12px; margin-right: 28px; }
.bookmarks a.jira { gap: 9px; margin-right: 31px; }
.bookmarks a svg { width: 24px; height: 24px; }
.edge { display: flex; justify-content: space-between; height: 2px; background: #e3e3e3; }
.edge i { align-self: flex-end; height: 1px; background: #000; }
.edge-left { width: 230px; }
.edge-right { width: 198px; }

/* Application shell */
.app { flex: 1; min-height: 0; display: flex; }
.side {
  position: relative; z-index: 1; width: 102px; flex: none; display: flex; flex-direction: column;
  padding: 38px 0 23px 20px; color: #66718a; box-shadow: 1px 0 6px #0002;
}
.brand { margin: 0 0 37px 9px; }
.brand svg { width: 46px; height: 36px; }
.item { width: 60px; height: 60px; margin-bottom: 6px; display: flex; align-items: center; justify-content: center; }
.item:last-child, .grow + .item { margin-bottom: 0; }
.item.on { background: #007dff; border-radius: 8px; }
.work { position: relative; flex: 1; min-width: 0; display: flex; flex-direction: column; }
.top {
  display: flex; gap: 12px; height: 79px; flex: none; padding: 9px 54px 9px 48px; border-bottom: 1px solid #ebedf1;
}
.box, .field { height: 60px; border: 1px solid #b9c2d0; border-radius: 6px; background: #fff; color: #66718a; }
.box { width: 60px; flex: none; display: flex; align-items: center; justify-content: center; }
.field { display: flex; align-items: center; }
.source { flex: 0 1 387px; gap: 17px; padding: 0 16px 0 23px; }
select { appearance: none; border: 0; background: none; padding: 0; }
.source select { flex: 1; min-width: 0; font-size: 22px; color: #2a2a2a; }
.query { flex: 1; padding: 0 25px 0 26px; box-shadow: 0 1px 3px #0001; }
.query input {
  flex: 1; min-width: 0; border: 0; outline: 0; padding: 0; margin: 0 28px 0 13px; font-size: 22px; color: #1b1b1b; background: none;
}
.ask { width: 96px; height: 48px; margin: 0 14px; border-radius: 4px; background: #007dff; color: #fff; font-size: 18px; font-weight: 600; }
.user { display: flex; align-items: center; margin-left: 18px; }
.bell { width: 30px; height: 36px; }
.moon { width: 40px; height: 36px; margin: 0 25px 0 31px; }
.avatar { width: 48px; height: 48px; border-radius: 50%; background: #e6f2ff; color: #465469; font-size: 21px; line-height: 48px; text-align: center; margin-right: 13px; }

/* Insight page */
.scroll { flex: 1; min-height: 0; display: flex; gap: 48px; padding: 15px 21px 0 63px; }
.content { flex: 1; min-width: 0; overflow: hidden; padding-top: 36px; }
.bar { width: 18px; padding: 4px; border-radius: 9px; background: #e6e8ef; }
.bar i { display: block; height: 52%; border-radius: 5px; background: #bcc3cf; }
.title { display: flex; align-items: center; gap: 12px; height: 48px; }
.back { margin: 0 14px 0 15px; }
h1 { flex: 1; font-size: 28px; font-weight: 500; color: #333; }
.tool { width: 48px; height: 48px; flex: none; border: 1px solid #b9c2d0; border-radius: 6px; color: #465469; display: flex; align-items: center; justify-content: center; }
.answer-for { display: flex; align-items: center; gap: 24px; margin: 36px 0 24px; }
.answer-for p { margin-right: -12px; white-space: nowrap; }
.chip { position: relative; height: 48px; padding: 0 9px; border-radius: 6px; background: #e6f2ff; display: flex; align-items: center; white-space: nowrap; }
.chip.bad { background: #fff1f1; }
.tip {
  position: absolute; bottom: 62px; left: 50%; transform: translateX(-50%); padding: 0 18px; line-height: 49px;
  border-radius: 12px; background: #465469; color: #fff; font-size: 17px; font-weight: 500;
}
.tip::after { content: ""; position: absolute; top: 100%; left: 50%; margin-left: -9px; border: 9px solid transparent; border-top-color: #465469; border-bottom: 0; }
.summary { padding: 36px 36px 38px; line-height: 32px; border-radius: 24px; background: #f9fafc; font-size: 21px; }
.controls { display: flex; align-items: center; height: 48px; margin-top: 15px; padding: 0 28px 0 24px; color: #465469; }
.ctype { display: flex; align-items: center; gap: 17px; margin: 0 auto 0 24px; }
.ctype select, .seg button { font-size: 22px; font-weight: 500; }
.seg { display: flex; width: 285px; padding: 3px; border-radius: 6px; background: #f2f4f8; }
.seg button { flex: 1; height: 42px; display: flex; align-items: center; justify-content: center; gap: 8px; border-radius: 6px; }
.seg .on { background: #fff; color: #007dff; box-shadow: 0 1px 5px #0003; }
.dots { width: 45px; height: 39px; margin-left: 41px; border-radius: 4px; background: #dfdfdf; display: flex; align-items: center; justify-content: center; }

/* Chart */
.chart {
  display: grid; grid-template-columns: 48px 45px 1fr; column-gap: 0; row-gap: 6px;
  padding: 44px 31px 0 0; color: #111;
}
.range { grid-column: 3; position: relative; height: 44px; margin: 0 0 0 8px; }
.track { position: absolute; left: 0; right: 0; top: 13px; height: 18px; border-radius: 9px; background: #f4f4f4; }
.track i { display: block; height: 18px; background: #d8d8d8; }
.range input {
  appearance: none; position: absolute; left: -22px; top: 0; width: calc(100% + 44px); height: 44px; margin: 0;
  background: none; pointer-events: none;
}
.range input::-webkit-slider-thumb {
  appearance: none; width: 44px; height: 44px; border: 1px solid #fff; border-radius: 50%; pointer-events: auto;
  background: linear-gradient(90deg, #333 1px, transparent 1px 6px, #333 6px 7px, transparent 7px) center / 8px 18px no-repeat #d8d8d8;
}
.axis-name { grid-column: 1; height: 324px; display: flex; align-items: center; justify-content: center; }
.axis-name span { writing-mode: vertical-rl; transform: rotate(180deg); font-size: 22px; }
.ticks { text-align: right; font-size: 20px; }
.ticks span { display: block; height: 108px; line-height: 24px; position: relative; top: -12px; }
.plot {
  position: relative; height: 324px; margin-left: 8px; display: grid; grid-template-columns: repeat(6, 1fr);
  background: linear-gradient(#d2d2d2 1px, transparent 1px) 0 0 / 100% 108px;
}
.col { display: flex; flex-direction: column; align-items: center; justify-content: flex-end; border-left: 1px solid #c8c8c8; }
.col:first-child { border-left: 2px solid #ccc; }
.col span { font-size: 17px; line-height: 20px; margin-bottom: 12px; }
.col i { width: 104px; background: #007dff; }
.zoom-out {
  position: absolute; right: 15px; top: 16px; width: 52px; height: 52px; border-radius: 50%;
  background: linear-gradient(#fff, #fff) center / 18px 1px no-repeat #007dff;
}
.refine {
  position: absolute; right: 35px; bottom: 34px; width: 257px; height: 72px; border: 3px solid #111; border-radius: 36px;
  background: #007dff; color: #fff; outline: 2px solid #fff; display: flex; align-items: center; justify-content: center; gap: 12px; padding-left: 10px;
  font-family: "Liberation Sans", Arial, sans-serif; font-size: 18px; font-weight: 700;
}
.refine svg { width: 28px; height: 28px; }

/* Taskbar */
.taskbar {
  flex: none; height: 72px; display: flex; justify-content: space-between; align-items: center; padding: 0 29px 0 226px;
  border-top: 2px solid #b0b5c0; font-family: "Open Sans", "Noto Sans", sans-serif; font-size: 18px;
  background: linear-gradient(90deg, #e1eef7, #e1eef8 18%, #d5e4fa 24%, #d6dcf4 33%, #d6e0f7 42%, #d9dcf0 58%, #d4def6 66%, #dde0f0 76%, #e1edf8 84%, #e0edf8);
}
.apps { display: flex; align-items: center; gap: 6px; }
.start { width: 54px; margin-right: 6px; }
.start svg { width: 36px; height: 36px; }
.find {
  display: flex; align-items: center; width: 327px; height: 46px; padding: 0 2px 0 16px; margin-right: 2px;
  border: 1px solid #bcc8dc; border-bottom-width: 2px; border-radius: 23px; background: #f4f8fe;
}
.find input { flex: 1; min-width: 0; border: 0; outline: 0; background: none; margin-left: 14px; padding: 0; font-size: 20px; }
.find input::placeholder { color: #555; opacity: 1; }
.ltim { display: flex; align-items: center; gap: 2px; height: 40px; padding: 0 8px; border-radius: 20px; background: #fff; font-size: 9px; font-style: italic; font-weight: 600; color: #444; }
.ltim svg { width: 12px; height: 12px; }
.app-btn { position: relative; width: 60px; height: 60px; border-radius: 6px; display: flex; align-items: center; justify-content: center; }
.app-btn > svg { width: 36px; height: 36px; }
.run::after { content: ""; position: absolute; bottom: 1px; left: 50%; margin-left: -5px; width: 9px; height: 5px; border-radius: 3px; background: #787f8c; }
.alert { background: #e8afac; }
.alert::after { background: #c42b1c; }
.current { background: #ebf0fa; box-shadow: inset 0 0 0 1px #dfe3ef; }
.current::after { width: 24px; margin-left: -12px; background: #0078d4; }
.badge { position: absolute; right: 3px; top: 4px; width: 24px; height: 24px; border-radius: 50%; color: #fff; font-size: 15px; line-height: 24px; text-align: center; }
.red { background: #c42b1c; }
.green { background: #689f38; }
.sky { background: #5cc4fa; display: flex; align-items: center; justify-content: center; }
.badge svg { width: 16px; height: 13px; }
.m365 { position: absolute; right: 12px; bottom: 11px; padding: 0 2px; border-radius: 2px; background: #111; color: #fff; font-size: 9px; line-height: 11px; font-weight: 700; }
.tray { display: flex; align-items: center; text-align: right; line-height: 24px; }
.tray > .s24 { margin: 0 27px 0 26px; }
.lang { text-align: center; }
.status { display: flex; gap: 12px; margin: 0 25px; }
```
